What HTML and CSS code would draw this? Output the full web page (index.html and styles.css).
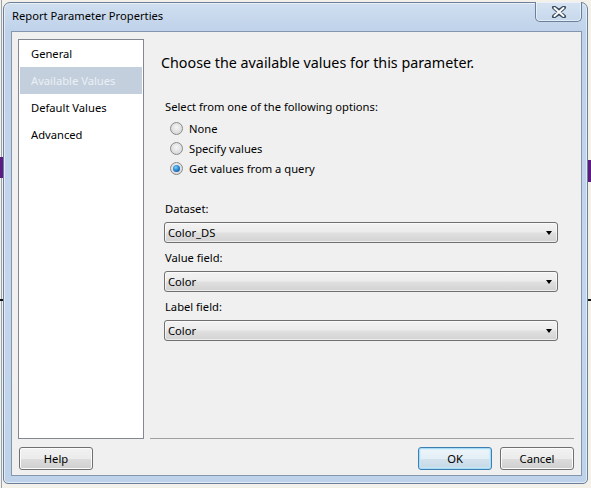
FILE: index.html
```html
<!DOCTYPE html>
<html>
<head>
<meta charset="utf-8">
<title>Report Parameter Properties</title>
<link rel="stylesheet" href="styles.css">
</head>
<body>
<div class="window">
  <div class="titlebar">
    <span class="title">Report Parameter Properties</span>
    <button class="close" aria-label="Close">
      <svg width="16" height="12" viewBox="0 0 16 12"><path d="M3 1.5 L8 5 L13 1.5 M3 10.5 L8 7 L13 10.5 M3 1.5 L13 10.5 M13 1.5 L3 10.5" fill="none" stroke="#3b4a5e" stroke-width="4" stroke-linecap="round"/><path d="M3.5 2 L12.5 10 M12.5 2 L3.5 10" fill="none" stroke="#ffffff" stroke-width="2" stroke-linecap="round"/></svg>
    </button>
  </div>
  <div class="client">
    <div class="main">
      <ul class="nav">
        <li>General</li>
        <li class="sel">Available Values</li>
        <li>Default Values</li>
        <li>Advanced</li>
      </ul>
      <div class="page">
        <h1 class="heading">Choose the available values for this parameter.</h1>
        <div class="options">
          <div class="opt-label">Select from one of the following options:</div>
          <label class="radio"><span class="circle"></span>None</label>
          <label class="radio"><span class="circle"></span>Specify values</label>
          <label class="radio"><span class="circle checked"></span>Get values from a query</label>
        </div>
        <div class="fields">
          <div class="flabel">Dataset:</div>
          <div class="combo"><span>Color_DS</span><span class="arrow"></span></div>
          <div class="flabel">Value field:</div>
          <div class="combo"><span>Color</span><span class="arrow"></span></div>
          <div class="flabel">Label field:</div>
          <div class="combo"><span>Color</span><span class="arrow"></span></div>
        </div>
      </div>
    </div>
    <div class="footer">
      <button class="btn">Help</button>
      <span class="spacer"></span>
      <button class="btn ok">OK</button>
      <button class="btn">Cancel</button>
    </div>
  </div>
</div>
</body>
</html>
```

FILE: styles.css
```css
* { box-sizing: border-box; }

html, body {
  margin: 0;
  padding: 0;
}

body {
  width: 591px;
  height: 488px;
  overflow: hidden;
  font-family: "Noto Sans", "Open Sans", sans-serif;
  font-size: 11.2px;
  color: #000;
  background-color: #f3f1ea;
  background-image:
    linear-gradient(#5c1b80, #5c1b80),
    linear-gradient(#5c1b80, #5c1b80),
    linear-gradient(#111, #111),
    linear-gradient(#111, #111),
    linear-gradient(#9aa2ad, #9aa2ad);
  background-position:
    0 157px,
    588px 160px,
    0 299px,
    588px 299px,
    1px 0;
  background-size:
    3px 21px,
    3px 22px,
    3px 2px,
    3px 2px,
    1px 100%;
  background-repeat: no-repeat;
}

.window {
  margin: 2px 0 0 3px;
  width: 585px;
  height: 482px;
  border: 1px solid #6a7f99;
  border-radius: 7px 7px 5px 5px;
  background: linear-gradient(180deg, #d0dff0 0px, #bfd2ea 28px, #c3d6ed 60%, #bed2ea 100%);
  box-shadow: inset 0 0 0 1px rgba(255, 255, 255, 0.55);
  padding: 0 5px 7px 7px;
  display: flex;
  flex-direction: column;
}

.titlebar {
  height: 28px;
  display: flex;
  align-items: flex-start;
}

.title {
  padding: 5px 0 0 1px;
  line-height: 16px;
  font-size: 11.2px;
  color: #000;
}

.close {
  margin: -1px 0 0 auto;
  width: 47px;
  height: 20px;
  padding: 0;
  border: 1px solid #6c7f98;
  border-top: none;
  border-radius: 0 0 5px 5px;
  background: linear-gradient(180deg, #d6e3f2 0%, #c7d8ec 100%);
  box-shadow: inset 0 0 0 1px rgba(255, 255, 255, 0.5);
  display: flex;
  align-items: center;
  justify-content: center;
}

.close svg { display: block; }

.client {
  width: 571px;
  height: 445px;
  border: 1px solid #8296ae;
  background: #f0f0f0;
  padding: 7px 7px 5px 6px;
  display: flex;
  flex-direction: column;
}

.main {
  display: flex;
  height: 400px;
}

.nav {
  width: 126px;
  height: 400px;
  margin: 0;
  padding: 0 1px;
  list-style: none;
  border: 1px solid #828790;
  background: #fff;
}

.nav li {
  height: 27px;
  line-height: 27px;
  padding-left: 11px;
  white-space: nowrap;
}

.nav li.sel {
  background: #c3cfdd;
  color: #eaf0f6;
}

.page {
  flex: 1;
  margin-left: 6px;
  border-bottom: 1px solid #a0a0a0;
}

.heading {
  margin: 0;
  padding: 14px 0 0 11px;
  font-size: 14.3px;
  font-weight: normal;
  line-height: 20px;
}

.options {
  margin-top: 26px;
  padding-left: 15px;
}

.opt-label {
  line-height: 16px;
  margin-bottom: 3px;
}

.radio {
  display: flex;
  align-items: center;
  height: 20px;
  padding-left: 5px;
  gap: 6px;
}

.circle {
  width: 13px;
  height: 13px;
  border-radius: 50%;
  border: 1px solid #8a8a8a;
  background: radial-gradient(circle at 50% 40%, #f6f6f6 0%, #e0e0e0 55%, #cfcfcf 100%);
  display: flex;
  align-items: center;
  justify-content: center;
}

.circle.checked::after {
  content: "";
  width: 7px;
  height: 7px;
  border-radius: 50%;
  background: radial-gradient(circle at 40% 35%, #7fd0fb 0%, #2a8ad4 45%, #0d3f80 100%);
}

.fields {
  margin-top: 23px;
  padding-left: 14px;
}

.flabel {
  line-height: 16px;
  padding-left: 1px;
  margin-bottom: 5px;
}

.combo {
  width: 394px;
  height: 21px;
  border: 1px solid #707070;
  border-radius: 3px;
  background: linear-gradient(180deg, #f3f3f3 0%, #ececec 45%, #dfdfdf 55%, #d2d2d2 100%);
  box-shadow: inset 0 0 0 1px rgba(255, 255, 255, 0.6);
  display: flex;
  align-items: center;
  justify-content: space-between;
  padding: 0 5px 0 3px;
  margin-bottom: 7px;
}

.arrow {
  width: 0;
  height: 0;
  border-left: 3.5px solid transparent;
  border-right: 3.5px solid transparent;
  border-top: 4px solid #000;
}

.footer {
  margin-top: 8px;
  display: flex;
  gap: 8px;
  padding-left: 1px;
}

.spacer { flex: 1; }

.btn {
  width: 74px;
  height: 23px;
  padding: 0;
  font-family: inherit;
  font-size: 11.2px;
  color: #000;
  border: 1px solid #707070;
  border-radius: 3px;
  background: linear-gradient(180deg, #f2f2f2 0%, #ebebeb 50%, #dddddd 51%, #cfcfcf 100%);
  box-shadow: inset 0 0 0 1px #fbfbfb;
}

.btn.ok {
  border-color: #3c7fb1;
  box-shadow: inset 0 0 0 1px #a8dcf6, inset 0 0 0 2px rgba(200, 235, 252, 0.6);
  background: linear-gradient(180deg, #eef6fb 0%, #e3eef6 50%, #d3e2ed 51%, #c6d8e6 100%);
}
```
